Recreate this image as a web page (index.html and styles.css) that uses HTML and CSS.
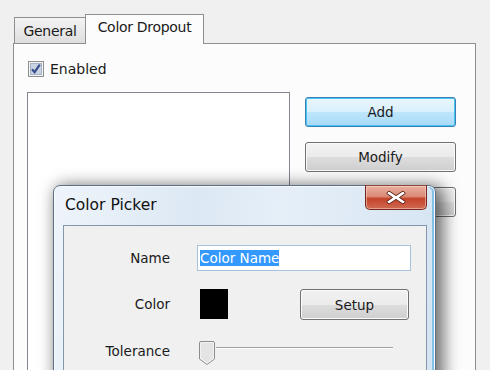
FILE: index.html
```html
<!DOCTYPE html>
<html lang="en">
<head>
    <meta charset="UTF-8">
    <title>Color Dropout</title>
    <link rel="stylesheet" href="styles.css">
</head>
<body>
    <div class="window">
        <div class="tabstrip">
            <div class="tab">General</div>
            <div class="tab active">Color Dropout</div>
        </div>

        <div class="panel">
            <label class="check">
                <svg class="box" width="16" height="16" viewBox="0 0 16 16">
                    <rect x="0.5" y="0.5" width="15" height="15" fill="#f4f4f4" stroke="#8e8f8f"/>
                    <rect x="2.5" y="2.5" width="11" height="11" fill="#c9d3e4" stroke="#a7b2c6"/>
                    <path d="M4 8.2 L6.6 11.2 L11.8 3.6" fill="none" stroke="#3b4f8c" stroke-width="2.2"/>
                </svg>
                Enabled
            </label>

            <div class="panel-body">
                <div class="listbox"></div>
                <div class="actions">
                    <button class="btn default">Add</button>
                    <button class="btn">Modify</button>
                    <button class="btn">Delete</button>
                </div>
            </div>
        </div>

        <!-- modal window over the tab page -->
        <div class="dialog">
            <div class="titlebar">Color Picker</div>
            <div class="close">
                <svg width="24" height="17" viewBox="0 0 24 17">
                    <path d="M5 2 L12 6.6 L19 2 L21.5 4.3 L15.5 8.5 L21.5 12.7 L19 15 L12 10.4 L5 15 L2.5 12.7 L8.5 8.5 L2.5 4.3 Z"
                          fill="#fff" stroke="#5e2016" stroke-width="1"/>
                </svg>
            </div>
            <div class="client">
                <div class="form">
                    <span class="lbl">Name</span>
                    <div class="field"><span class="sel">Color Name</span></div>

                    <span class="lbl">Color</span>
                    <div class="color-row">
                        <div class="swatch"></div>
                        <button class="btn setup">Setup</button>
                    </div>

                    <span class="lbl">Tolerance</span>
                    <div class="slider">
                        <svg class="thumb" width="18" height="26" viewBox="0 0 18 26">
                            <path d="M1.5 3 Q1.5 1.5 3 1.5 L15 1.5 Q16.5 1.5 16.5 3 L16.5 19 L9 24.5 L1.5 19 Z"
                                  fill="#f3f3f3" stroke="#8c8c8c"/>
                            <path d="M3 3 L15 3 L15 18.3 L9 22.8 L3 18.3 Z" fill="#e4e4e4"/>
                        </svg>
                        <div class="track"></div>
                    </div>
                </div>
            </div>
        </div>
    </div>
</body>
</html>
```

FILE: styles.css
```css
:root {
  --face: #f0f0f0;
  --page: #fcfcfc;
  --edge: #8e8f8f;
}

body {
  margin: 0;
  background: var(--face);
  font-family: "DejaVu Sans", "Liberation Sans", sans-serif;
  font-size: 14px;
  color: #1a1a1a;
  overflow: hidden;
}

.window {
  position: relative;
  width: 490px;
  height: 370px;
  overflow: hidden;
}

/* tabs */
.tabstrip {
  display: flex;
  align-items: flex-end;
  padding: 14px 0 0 14px;
}

.tab {
  height: 26px;
  width: 71px;
  box-sizing: border-box;
  border: 1px solid var(--edge);
  border-right: none;
  border-bottom: none;
  background: linear-gradient(#f3f3f3, #dedede);
  line-height: 27px;
  text-align: center;
  letter-spacing: -0.3px;
}

.tab.active {
  position: relative;
  z-index: 1;
  height: 30px;
  width: 119px;
  margin-bottom: -1px;
  border-right: 1px solid var(--edge);
  background: var(--page);
  line-height: 25px;
}

.panel {
  margin-left: 13px;
  width: 463px;
  height: 340px;
  box-sizing: border-box;
  border: 1px solid var(--edge);
  background: var(--page);
  padding: 17px 13px 0 13px;
}

.check {
  display: flex;
  align-items: center;
  gap: 6px;
  margin-left: 1px;
  height: 16px;
}

.panel-body {
  display: flex;
  margin-top: 15px;
}

.listbox {
  width: 263px;
  height: 300px;
  box-sizing: border-box;
  border: 1px solid #828790;
  background: #fff;
}

.actions {
  display: flex;
  flex-direction: column;
  gap: 15px;
  margin: 5px 0 0 15px;
}

.btn {
  width: 151px;
  height: 30px;
  border: 1px solid #707070;
  border-radius: 3px;
  background: linear-gradient(#f2f2f2 0%, #ebebeb 50%, #dddddd 51%, #cfcfcf 100%);
  box-shadow: inset 0 0 0 1px #fbfbfb;
  font: inherit;
  font-size: 13.5px;
  color: #1a1a1a;
  padding: 0;
}

.btn.default {
  border-color: #3c7fb1;
  background: linear-gradient(#eaf6fd 0%, #d9f0fc 50%, #bee6fd 51%, #a7d9f5 100%);
  box-shadow: inset 0 0 0 1px #48c4f5;
}

/* color picker window */
.dialog {
  position: absolute;
  left: 53px;
  top: 185px;
  width: 383px;
  height: 220px;
  box-sizing: border-box;
  border: 1px solid #5c6f86;
  border-radius: 7px 7px 0 0;
  background: linear-gradient(100deg, #eef4fa 0%, #dce8f4 35%, #e6eff8 55%, #d4e3f2 100%);
  box-shadow: inset 0 0 0 1px #f6fafd, inset -2px 0 0 1px #86c0e4, 5px 3px 16px 3px rgba(0, 0, 0, 0.55);
}

.titlebar {
  height: 39px;
  padding-left: 11px;
  line-height: 38px;
  font-size: 15.5px;
  color: #111;
}

.close {
  position: absolute;
  top: -1px;
  right: 8px;
  width: 62px;
  height: 25px;
  box-sizing: border-box;
  border: 1px solid #75271b;
  border-top-color: #8a4a40;
  border-radius: 0 0 5px 5px;
  background: linear-gradient(#eab0a2 0%, #db8a76 45%, #c4432b 55%, #d06a52 100%);
  box-shadow: inset 0 0 0 1px rgba(255, 220, 210, 0.5);
  display: flex;
  align-items: center;
  justify-content: center;
}

.client {
  margin: 0 8px 0 9px;
  height: 200px;
  border: 1px solid #8396ab;
  background: var(--face);
  padding-top: 19px;
}

.form {
  display: grid;
  grid-template-columns: 106px 214px;
  column-gap: 27px;
  row-gap: 16px;
  align-items: center;
}

.lbl {
  text-align: right;
  font-size: 13.5px;
}

.field {
  height: 26px;
  box-sizing: border-box;
  border: 1px solid #a7c2de;
  background: #fff;
  padding: 3px 2px;
  font-size: 13.5px;
  line-height: 18px;
}

.sel {
  background: #3399ff;
  color: #fff;
}

.color-row {
  display: flex;
  align-items: center;
}

.swatch {
  width: 28px;
  height: 30px;
  margin-left: 3px;
  background: #000;
}

.btn.setup {
  width: 109px;
  height: 31px;
  margin: 2px 2px 0 auto;
}

.slider {
  display: flex;
  align-items: flex-start;
  height: 26px;
  margin-top: 4px;
}

.thumb {
  display: block;
  margin-left: 1px;
}

.track {
  width: 177px;
  height: 0;
  margin-top: 7px;
  border-top: 1px solid #a0a0a0;
  border-bottom: 1px solid #fff;
}
```
